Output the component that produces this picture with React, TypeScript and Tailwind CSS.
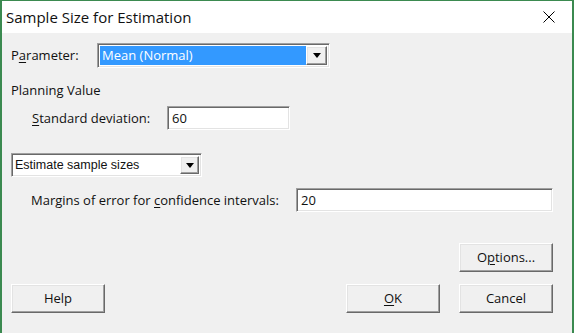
import { useState } from "react";

const font = { fontFamily: '"Open Sans", "Noto Sans", sans-serif' };

const sunken =
  "border border-t-[#a0a0a0] border-l-[#a0a0a0] border-r-white border-b-white bg-white shadow-[inset_1px_1px_0_#696969,inset_-1px_-1px_0_#e3e3e3]";

const raised =
  "border border-t-white border-l-white border-r-[#696969] border-b-[#696969] bg-[#f0f0f0] shadow-[inset_-1px_-1px_0_#a0a0a0,inset_1px_1px_0_#e3e3e3]";

const Caret = () => (
  <svg width="8" height="5" viewBox="0 0 8 5">
    <path d="M0 0h8L4 5z" fill="#000" />
  </svg>
);

const Button = ({ children, className }: { children: React.ReactNode; className?: string }) => (
  <button
    className={`${raised} flex h-[29px] w-[94px] items-center justify-center text-[13px] leading-none text-[#111] ${className ?? ""}`}
  >
    {children}
  </button>
);

const App = () => {
  const [stdDev, setStdDev] = useState("60");
  const [margin, setMargin] = useState("20");

  return (
    <div
      className="flex h-[333px] w-[574px] flex-col border-t border-r-2 border-l-2 border-[#3b8a50] bg-[#f0f0f0] text-[#111]"
      style={font}
    >
      {/* title bar */}
      <div className="flex h-[32px] items-center justify-between bg-white pr-[17px] pl-[4px]">
        <span className="text-[15px] leading-none">Sample Size for Estimation</span>
        <svg width="12" height="12" viewBox="0 0 12 12">
          <path d="M0.5 0.5l11 11M11.5 0.5l-11 11" stroke="#000" strokeWidth="1" />
        </svg>
      </div>

      <div className="flex flex-col pr-[19px] pl-[9px] text-[13px] leading-none">
        <div className="mt-[10px] flex h-[25px] items-center">
          <span className="w-[86px]">
            P<u className="underline-offset-2">a</u>rameter:
          </span>
          <div className={`${sunken} flex h-[25px] w-[233px] items-center p-[2px]`}>
            <div className="flex h-full flex-1 items-center bg-[#3399ff] pl-[2px] text-white">
              Mean (Normal)
            </div>
            <div className={`${raised} flex h-full w-[21px] items-center justify-center`}>
              <Caret />
            </div>
          </div>
        </div>

        <div className="mt-[14px] flex h-[16px] items-center">Planning Value</div>

        <div className="mt-[8px] flex h-[24px] items-center pl-[21px]">
          <span className="w-[135px]">
            <u className="underline-offset-2">S</u>tandard deviation:
          </span>
          <input
            className={`${sunken} h-[24px] w-[123px] px-[4px] text-[13px] outline-none`}
            value={stdDev}
            onChange={({ target }) => setStdDev(target.value)}
          />
        </div>

        <div
          className={`${sunken} mt-[23px] flex h-[24px] w-[191px] items-center p-[2px] text-[12.5px]`}
          style={{ fontFamily: '"Liberation Sans", Arial, sans-serif' }}
        >
          <span className="flex-1 pl-[1px]">Estimate sample sizes</span>
          <div className={`${raised} flex h-full w-[19px] items-center justify-center`}>
            <Caret />
          </div>
        </div>

        <div className="mt-[11px] flex h-[24px] items-center pl-[20px]">
          <span className="w-[265px]">
            Margins of error for <u className="underline-offset-2">c</u>onfidence intervals:
          </span>
          <input
            className={`${sunken} h-[24px] flex-1 px-[4px] text-[13px] outline-none`}
            value={margin}
            onChange={({ target }) => setMargin(target.value)}
          />
        </div>

        <div className="mt-[31px] flex justify-end">
          <Button>
            O<u className="underline-offset-2">p</u>tions...
          </Button>
        </div>

        <div className="mt-[12px] flex items-center">
          <Button>Help</Button>
          <div className="flex-1" />
          <Button>
            <u className="underline-offset-2">O</u>K
          </Button>
          <Button className="ml-[19px]">Cancel</Button>
        </div>
      </div>
    </div>
  );
};

export default App;
